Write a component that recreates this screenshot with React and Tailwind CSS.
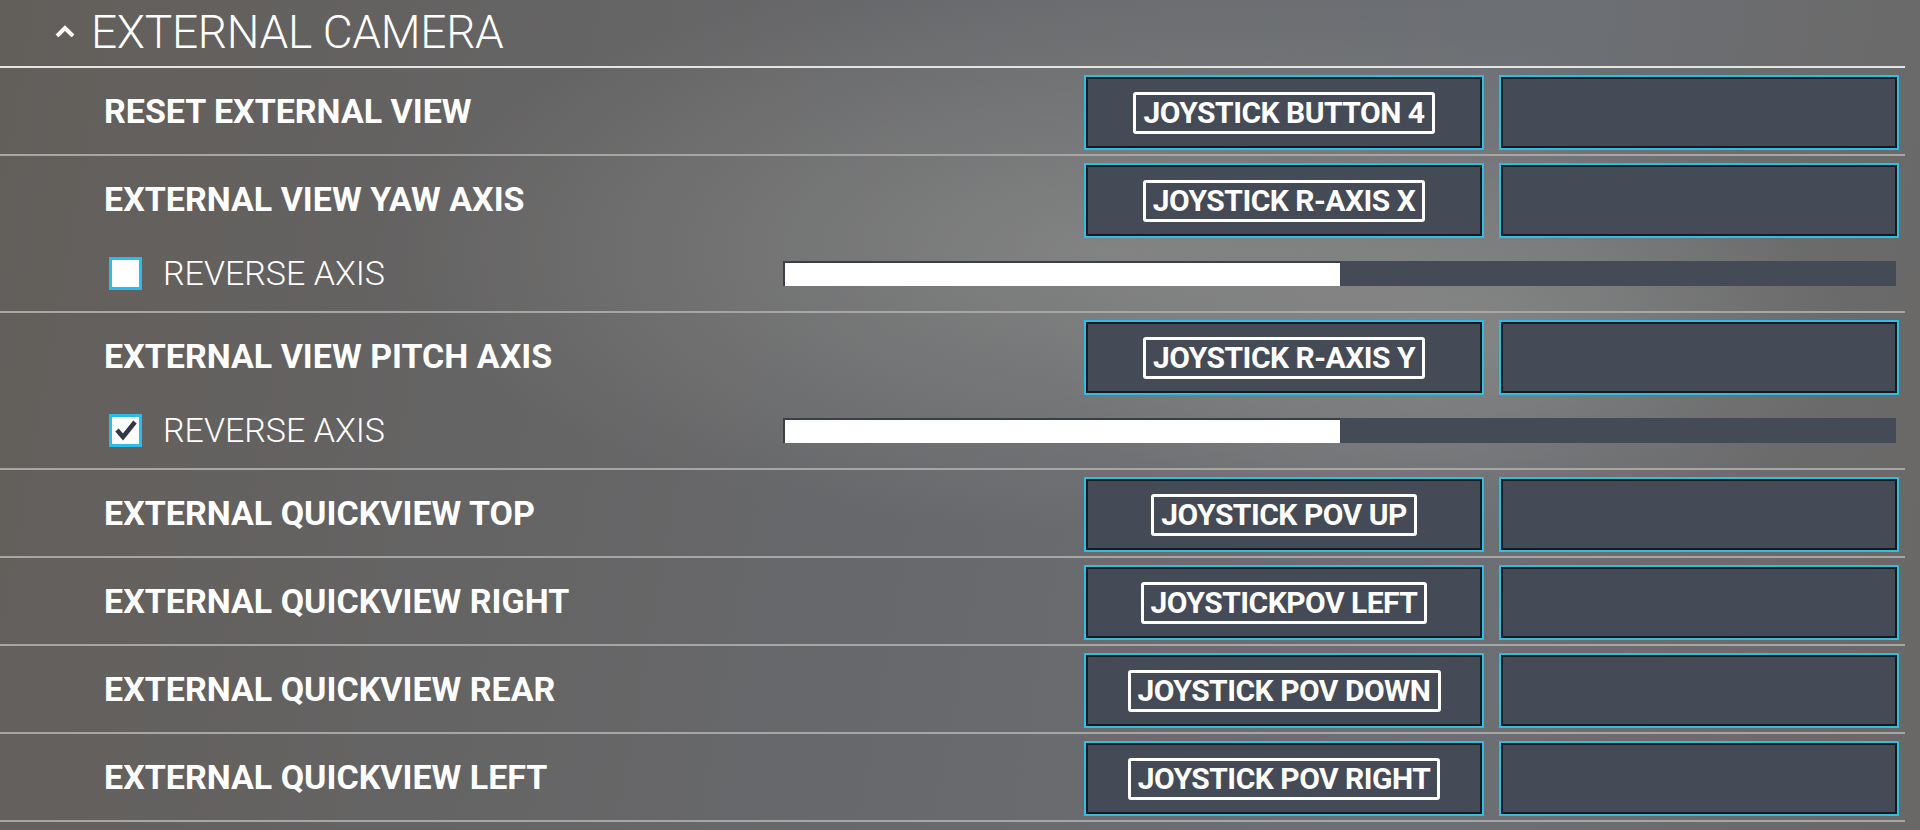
import { useState } from "react";

const bindings = [
  { id: "reset", label: "RESET EXTERNAL VIEW", input: "JOYSTICK BUTTON 4" },
  { id: "yaw", label: "EXTERNAL VIEW YAW AXIS", input: "JOYSTICK R-AXIS X", axis: true, reversed: false, value: 50 },
  { id: "pitch", label: "EXTERNAL VIEW PITCH AXIS", input: "JOYSTICK R-AXIS Y", axis: true, reversed: true, value: 50 },
  { id: "top", label: "EXTERNAL QUICKVIEW TOP", input: "JOYSTICK POV UP" },
  { id: "right", label: "EXTERNAL QUICKVIEW RIGHT", input: "JOYSTICKPOV LEFT" },
  { id: "rear", label: "EXTERNAL QUICKVIEW REAR", input: "JOYSTICK POV DOWN" },
  { id: "left", label: "EXTERNAL QUICKVIEW LEFT", input: "JOYSTICK POV RIGHT" },
];

function InputSlot({ input }) {
  return (
    <div className="w-[400px] h-[75px] flex items-center justify-center bg-[#454b56] border-2 border-[#2ebde4] shadow-[inset_0_0_0_2px_#16191e]">
      {input && (
        <span className="h-[42px] px-[7px] flex items-center border-[3px] border-white rounded-[3px] text-white font-bold text-[30px] tracking-[-0.5px] leading-none">
          {input}
        </span>
      )}
    </div>
  );
}

function Checkbox({ checked, onChange }) {
  return (
    <button
      onClick={onChange}
      className="w-[33px] h-[33px] border-[3px] border-[#27bdec] bg-white flex items-center justify-center"
    >
      {checked && (
        <svg width="24" height="22" viewBox="0 0 24 22">
          <polyline points="3,11 9,18 21,3" fill="none" stroke="#323844" strokeWidth="4.5" strokeLinejoin="miter" />
        </svg>
      )}
    </button>
  );
}

function BindingRow({ row, reversed, onToggle }) {
  return (
    <div className="border-b-2 border-[#a6a6a4]">
      <div className="h-[86px] flex items-start">
        <div className="flex-1 h-full flex items-center pl-[104px] text-white font-bold text-[34px]">
          {row.label}
        </div>
        <div className="flex gap-[15px] pt-[7px] pr-[6px]">
          <InputSlot input={row.input} />
          <InputSlot />
        </div>
      </div>
      {row.axis && (
        <div className="h-[62px] mb-[7px] flex items-center pr-[9px]">
          <div className="w-[640px] flex items-center pl-[109px] gap-[21px]">
            <Checkbox checked={reversed} onChange={onToggle} />
            <span className="text-white font-light text-[34px]">REVERSE AXIS</span>
          </div>
          <div className="ml-[143px] flex-1 h-[25px] bg-[#454b56]">
            <div className="h-full bg-white border-l-2 border-t-2 border-[#3a3f48]" style={{ width: `${row.value}%` }} />
          </div>
        </div>
      )}
    </div>
  );
}

export default function App() {
  const [open, setOpen] = useState(true);
  const [reversed, setReversed] = useState(
    Object.fromEntries(bindings.map(b => [b.id, !!b.reversed]))
  );

  return (
    <div
      className="w-[1920px] h-[830px] overflow-hidden font-['Roboto',sans-serif] bg-[radial-gradient(ellipse_700px_280px_at_1100px_250px,rgba(150,150,146,0.55),rgba(150,150,146,0)_100%),radial-gradient(ellipse_400px_200px_at_1450px_340px,rgba(150,148,142,0.45),rgba(150,148,142,0)_100%),linear-gradient(100deg,#625e5a_0%,#67686b_45%,#6c6f74_75%,#6a6866_100%)]"
    >
      <div className="w-[1905px]">
        <button
          onClick={() => setOpen(!open)}
          className="w-full h-[68px] flex items-center border-b-2 border-[#e4e4e2] pb-[2px]"
        >
          <svg width="20" height="12" viewBox="0 0 20 12" className="ml-[55px] mr-[16px] mt-[-2px]">
            <polyline points="2,11 10,3 18,11" fill="none" stroke="white" strokeWidth="4" />
          </svg>
          <span className="text-white font-light text-[46px] leading-none tracking-[-0.3px]">EXTERNAL CAMERA</span>
        </button>
        {open &&
          bindings.map(row => (
            <BindingRow
              key={row.id}
              row={row}
              reversed={reversed[row.id]}
              onToggle={() => setReversed({ ...reversed, [row.id]: !reversed[row.id] })}
            />
          ))}
      </div>
    </div>
  );
}
